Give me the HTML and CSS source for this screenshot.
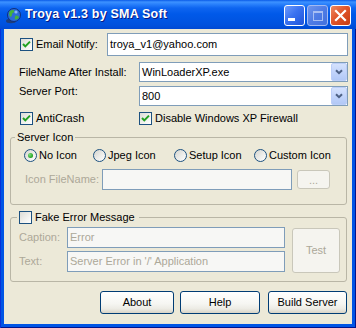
FILE: index.html
```html
<!DOCTYPE html>
<html>
<head>
<meta charset="utf-8">
<title>Troya v1.3 by SMA Soft</title>
<link rel="stylesheet" href="styles.css">
</head>
<body>
<div class="window">
  <div class="titlebar">
    <svg class="app-icon" width="17" height="17" viewBox="0 0 17 17">
      <ellipse cx="6" cy="14" rx="5" ry="2.2" fill="#2B3550" opacity="0.7"/>
      <circle cx="9" cy="8" r="6.5" fill="#2C6BD6" stroke="#0F2F7A" stroke-width="1"/>
      <path d="M4.5 4.5 Q7 2.2 9.5 3.5 Q9 6 7 6.5 Q7.5 9 5 10 Q3.2 7.5 4.5 4.5 Z" fill="#44B23C"/>
      <path d="M10.5 8.5 Q13.5 8 14 10.5 Q12.5 13 10 12.5 Q9.5 10.5 10.5 8.5 Z" fill="#44B23C"/>
      <circle cx="11" cy="5" r="1.6" fill="#9CC8FF" opacity="0.8"/>
    </svg>
    <span class="title">Troya v1.3 by SMA Soft</span>
    <div class="caption-buttons">
      <span class="cap-btn cap-min"><span class="min-bar"></span></span>
      <span class="cap-btn cap-max"><span class="max-box"></span></span>
      <span class="cap-btn cap-close">
        <svg width="19" height="19" viewBox="0 0 19 19"><path d="M5 5 L14 14 M14 5 L5 14" stroke="#fff" stroke-width="2.2" stroke-linecap="square"/></svg>
      </span>
    </div>
  </div>

  <div class="client">
    <div class="row r1">
      <label class="check-item email-cell">
        <span class="chk"><svg width="11" height="11" viewBox="0 0 11 11"><path d="M2 5 L4.3 7.4 L9 2.6" fill="none" stroke="#21A121" stroke-width="2"/></svg></span>
        <span>Email Notify:</span>
      </label>
      <div class="textbox email-box">troya_v1@yahoo.com</div>
    </div>

    <div class="row r2">
      <span class="lbl wide-lbl">FileName After Install:</span>
      <div class="select">
        <span class="sel-text">WinLoaderXP.exe</span>
        <span class="drop"><svg width="8" height="6" viewBox="0 0 8 6"><path d="M1 1.2 L4 4.2 L7 1.2" fill="none" stroke="#4D6185" stroke-width="2"/></svg></span>
      </div>
    </div>

    <div class="row r3">
      <span class="lbl wide-lbl raise">Server Port:</span>
      <div class="select">
        <span class="sel-text">800</span>
        <span class="drop"><svg width="8" height="6" viewBox="0 0 8 6"><path d="M1 1.2 L4 4.2 L7 1.2" fill="none" stroke="#4D6185" stroke-width="2"/></svg></span>
      </div>
    </div>

    <div class="row r4">
      <label class="check-item anti-cell">
        <span class="chk"><svg width="11" height="11" viewBox="0 0 11 11"><path d="M2 5 L4.3 7.4 L9 2.6" fill="none" stroke="#21A121" stroke-width="2"/></svg></span>
        <span>AntiCrash</span>
      </label>
      <label class="check-item">
        <span class="chk"><svg width="11" height="11" viewBox="0 0 11 11"><path d="M2 5 L4.3 7.4 L9 2.6" fill="none" stroke="#21A121" stroke-width="2"/></svg></span>
        <span>Disable Windows XP Firewall</span>
      </label>
    </div>

    <fieldset class="group g1">
      <legend class="legend">Server Icon</legend>
      <div class="radio-row">
        <label class="radio-item"><span class="radio on"><span class="dot"></span></span>No Icon</label>
        <label class="radio-item"><span class="radio"></span>Jpeg Icon</label>
        <label class="radio-item"><span class="radio"></span>Setup Icon</label>
        <label class="radio-item"><span class="radio"></span>Custom Icon</label>
      </div>
      <div class="file-row">
        <span class="lbl dis file-lbl">Icon FileName:</span>
        <div class="textbox dis-box file-box"></div>
        <span class="btn dis-btn browse">...</span>
      </div>
    </fieldset>

    <fieldset class="group g2">
      <legend class="legend legend-chk">
        <label class="check-item"><span class="chk"></span><span>Fake Error Message</span></label>
      </legend>
      <div class="err-body">
        <div class="err-fields">
          <div class="err-row"><span class="lbl dis err-lbl">Caption:</span><div class="textbox dis-box err-box">Error</div></div>
          <div class="err-row"><span class="lbl dis err-lbl">Text:</span><div class="textbox dis-box err-box">Server Error in '/' Application</div></div>
        </div>
        <span class="btn dis-btn test-btn">Test</span>
      </div>
    </fieldset>

    <div class="actions">
      <span class="btn about-btn">About</span>
      <span class="btn help-btn">Help</span>
      <span class="btn build-btn">Build Server</span>
    </div>
  </div>
</div>
</body>
</html>
```

FILE: styles.css
```css
* { box-sizing: border-box; }

body {
  margin: 0;
  font-family: "Liberation Sans", Arial, sans-serif;
  font-size: 11px;
  line-height: 13px;
  color: #000;
}

.window {
  width: 356px;
  height: 328px;
  display: flex;
  flex-direction: column;
  background: #0055E5;
  box-shadow: inset 1px 0 #0831D9, inset -1px 0 #00138C, inset 0 -1px #00138C;
}

/* ---------- title bar ---------- */
.titlebar {
  flex: none;
  height: 29px;
  display: flex;
  align-items: center;
  padding: 0 5px 0 5px;
  background: linear-gradient(to bottom,
    #0A5BE8 0px, #3D92FF 2px, #2B82FC 4px, #0E65F0 8px,
    #0059E9 14px, #0055E3 20px, #0051DD 25px, #0049D3 29px);
}

.app-icon {
  flex: none;
  margin: 1px 3px 0 0;
}

.title {
  flex: 1;
  color: #fff;
  font-weight: bold;
  font-size: 12.5px;
  letter-spacing: 0.2px;
  text-shadow: 1px 1px 0 #0A1883;
  white-space: nowrap;
}

.caption-buttons {
  display: flex;
  gap: 2px;
  margin-top: 2px;
}

.cap-btn {
  width: 21px;
  height: 21px;
  border: 1px solid #fff;
  border-radius: 3px;
  display: flex;
}

.cap-min {
  background: linear-gradient(135deg, #6E9BFB 0%, #3A72F0 45%, #1F54DA 100%);
  align-items: flex-start;
  padding: 12px 0 0 3px;
}

.min-bar {
  width: 7px;
  height: 3px;
  background: #fff;
}

.cap-max {
  background: linear-gradient(135deg, #6F95EC 0%, #4F7CE5 50%, #4270DE 100%);
  border-color: #A3BAF2;
  align-items: center;
  justify-content: center;
}

.max-box {
  width: 10px;
  height: 10px;
  border: 1px solid #A7BEF3;
  border-top-width: 2px;
}

.cap-close {
  background: linear-gradient(135deg, #EE8A63 0%, #E0552B 45%, #C83C12 100%);
  align-items: center;
  justify-content: center;
}

/* ---------- client ---------- */
.client {
  flex: 1;
  margin: 0 4px 4px 4px;
  background: #ECE9D8;
  padding: 0 4px 0 6px;
  display: flex;
  flex-direction: column;
}

.row {
  display: flex;
  align-items: center;
  flex: none;
}

.r1 { margin-top: 4px; height: 23px; padding-left: 10px; }
.r2 { margin-top: 6px; height: 20px; padding-left: 9px; }
.r3 { margin-top: 4px; height: 20px; padding-left: 9px; align-items: flex-start; }
.r4 { margin-top: 6px; height: 13px; padding-left: 10px; }

.raise { margin-top: -1px; }

.email-cell { width: 87px; }
.anti-cell { width: 119px; }
.wide-lbl { width: 120px; flex: none; }

.lbl { white-space: nowrap; }
.dis { color: #ACA899; }

.check-item {
  display: flex;
  align-items: center;
  white-space: nowrap;
}

.chk {
  flex: none;
  width: 13px;
  height: 13px;
  border: 1px solid #1C5180;
  background: linear-gradient(135deg, #DCDCD7 0%, #F2F2EF 60%, #FFFFFF 100%);
  margin-right: 3px;
  display: flex;
}

.textbox {
  flex: none;
  border: 1px solid #7F9DB9;
  background: #fff;
  padding-left: 2px;
  display: flex;
  align-items: center;
  white-space: nowrap;
  overflow: hidden;
}

.email-box { width: 241px; height: 23px; }

.dis-box {
  background: #F7F7F5;
  color: #ACA899;
}

.select {
  flex: none;
  width: 209px;
  height: 20px;
  border: 1px solid #7F9DB9;
  background: #fff;
  display: flex;
  align-items: center;
}

.sel-text {
  flex: 1;
  padding-left: 2px;
}

.drop {
  width: 16px;
  height: 18px;
  border: 1px solid #BCCEF8;
  border-radius: 2px;
  background: linear-gradient(to bottom, #D5E2FD 0%, #C2D4FB 50%, #B2C8F6 100%);
  display: flex;
  align-items: center;
  justify-content: center;
}

/* ---------- group boxes ---------- */
.group {
  flex: none;
  border: 1px solid #B9B6A6;
  border-radius: 3px;
  margin: 6px 1px 0 0;
  padding: 0 0 14px 0;
  min-width: 0;
}

.legend {
  padding: 0 2px;
  margin-left: 4px;
  line-height: 13px;
}

.radio-row {
  display: grid;
  grid-template-columns: 69px 81px 80px auto;
  margin-top: 5px;
  padding-left: 13px;
  height: 13px;
}

.radio-item {
  display: flex;
  align-items: center;
  white-space: nowrap;
}

.radio {
  flex: none;
  width: 13px;
  height: 13px;
  border: 1px solid #1C5180;
  border-radius: 50%;
  background: linear-gradient(135deg, #D4D4CE 0%, #EDEDEA 55%, #FFFFFF 100%);
  margin-right: 2px;
  display: flex;
  align-items: center;
  justify-content: center;
}

.dot {
  width: 5px;
  height: 5px;
  border-radius: 50%;
  background: radial-gradient(circle at 35% 35%, #7DE07D 0%, #21A121 70%);
}

.file-row {
  display: flex;
  align-items: center;
  margin-top: 7px;
  padding-left: 14px;
  height: 21px;
}

.file-lbl { width: 77px; flex: none; }
.file-box { width: 190px; height: 21px; }

/* ---------- buttons ---------- */
.btn {
  flex: none;
  height: 23px;
  border: 1px solid #003C74;
  border-radius: 3px;
  background: linear-gradient(to bottom, #FFFFFF 0%, #F6F6F2 55%, #ECEBE4 80%, #D8D3C6 100%);
  display: flex;
  align-items: center;
  justify-content: center;
  white-space: nowrap;
}

.dis-btn {
  border-color: #C9C7BA;
  background: #F5F4EF;
  color: #ACA899;
}

.browse {
  width: 33px;
  height: 19px;
  margin-left: 5px;
  padding-top: 2px;
}

.g2 { padding-bottom: 8px; margin-top: 6px; }

.legend-chk {
  margin-left: 6px;
  padding: 0 4px 0 2px;
}

.err-body {
  display: flex;
  align-items: flex-start;
  margin-top: 3px;
}

.err-fields {
  display: flex;
  flex-direction: column;
  gap: 3px;
  padding-left: 8px;
}

.err-row {
  display: flex;
  align-items: center;
  height: 21px;
}

.err-lbl { width: 48px; flex: none; }
.err-box { width: 218px; height: 21px; }

.test-btn {
  width: 48px;
  height: 45px;
  margin-left: 7px;
  margin-top: 1px;
}

.actions {
  display: flex;
  justify-content: flex-end;
  margin-top: 9px;
  padding-right: 1px;
}

.about-btn { width: 74px; }
.help-btn { width: 80px; margin-left: 6px; }
.build-btn { width: 79px; margin-left: 8px; }
```
